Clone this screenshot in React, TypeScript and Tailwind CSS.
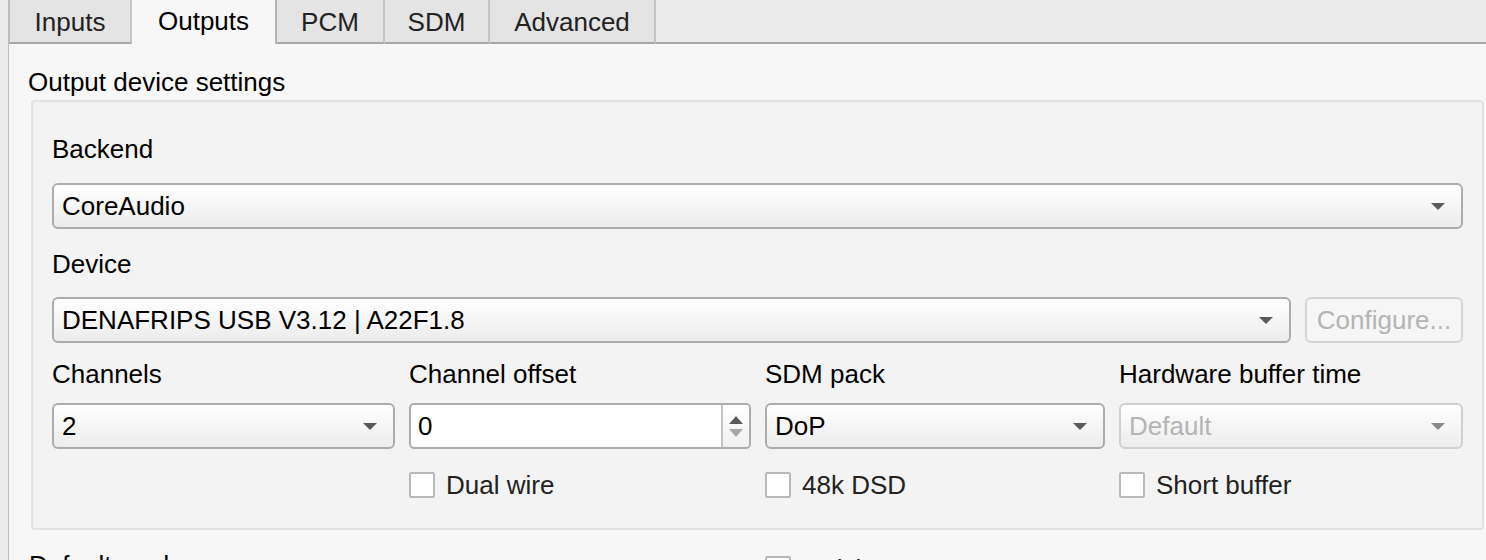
import React from 'react';

const font = { fontFamily: '"Liberation Sans", Arial, sans-serif' };

const Arrow: React.FC<{ light?: boolean }> = ({ light }) => (
  <svg width="16" height="9" viewBox="0 0 16 9" className="shrink-0">
    <path d="M1 1h14L8 8z" fill={light ? '#8a8a8a' : '#5a5a5a'} />
  </svg>
);

interface ComboProps {
  value: string;
  disabled?: boolean;
  className?: string;
}

const Combo: React.FC<ComboProps> = ({ value, disabled, className = '' }) => (
  <div
    className={`h-[46px] flex items-center justify-between pl-[8px] pr-[15px] rounded-[6px] border-2 ${
      disabled ? 'border-[#d0d0d0] text-[#b4b4b4]' : 'border-[#acacac] text-black'
    } bg-gradient-to-b from-white to-[#ececec] ${className}`}
  >
    <span className="leading-none">{value}</span>
    <Arrow light={disabled} />
  </div>
);

const Check: React.FC<{ label: string }> = ({ label }) => (
  <div className="flex items-center gap-[11px] h-[26px]">
    <div className="w-[26px] h-[26px] bg-white border-2 border-[#b9b9b9] rounded-[2px]" />
    <span className="text-[#222]">{label}</span>
  </div>
);

const Spin: React.FC<{ value: string }> = ({ value }) => (
  <div className="h-[46px] flex rounded-[5px] border-2 border-[#acacac] bg-white overflow-hidden">
    <div className="flex-1 flex items-center pl-[7px]">{value}</div>
    <div className="w-[28px] border-l-2 border-[#c4c4c4] flex flex-col items-center justify-center gap-[5px] bg-gradient-to-b from-white to-[#f0f0f0]">
      <svg width="14" height="8" viewBox="0 0 14 8">
        <path d="M7 0l7 8H0z" fill="#5a5a5a" />
      </svg>
      <svg width="14" height="8" viewBox="0 0 14 8">
        <path d="M0 0h14L7 8z" fill="#a8a8a8" />
      </svg>
    </div>
  </div>
);

const tabs = [
  { name: 'Inputs', w: 'w-[124px]' },
  { name: 'Outputs', w: 'w-[145px]', active: true },
  { name: 'PCM', w: 'w-[108px]' },
  { name: 'SDM', w: 'w-[105px]' },
  { name: 'Advanced', w: 'w-[166px]' },
];

export default function App() {
  return (
    <div style={font} className="w-[1486px] h-[560px] overflow-hidden bg-[#ececec] flex flex-col text-[26px] text-black">
      {/* tab bar */}
      <div className="h-[44px] flex shrink-0 pl-[8px]">
        {tabs.map((t, i) =>
          t.active ? (
            <div
              key={t.name}
              className={`${t.w} bg-[#f7f7f7] border-r-2 border-[#b4b4b4] flex items-start justify-center pt-[2px]`}
            >
              {t.name}
            </div>
          ) : (
            <div
              key={t.name}
              className={`${t.w} bg-[#e4e4e4] border-b-2 border-[#a8a8a8] ${i === 0 ? 'border-l-2' : ''} border-r-2 border-r-[#c4c4c4] border-l-[#bdbdbd] flex items-center justify-center pt-[2px] text-[#222]`}
            >
              {t.name}
            </div>
          )
        )}
        <div className="flex-1 border-b-2 border-[#a8a8a8]" />
      </div>

      {/* pane */}
      <div className="flex-1 ml-[8px] border-l border-[#bdbdbd] bg-[#f7f7f7] pl-[20px] pr-[2px] pt-[23px]">
        <div className="leading-[30px] h-[33px] -ml-[1px]">Output device settings</div>

        <div className="ml-[2px] rounded-[4px] border-2 border-[#e2e2e2] bg-[#f3f3f3] px-[19px] pt-[32px] pb-[30px]">
          <div className="leading-[30px]">Backend</div>
          <Combo value="CoreAudio" className="mt-[19px]" />

          <div className="leading-[30px] mt-[20px]">Device</div>
          <div className="flex gap-[14px] mt-[18px]">
            <Combo value="DENAFRIPS USB V3.12 | A22F1.8" className="flex-1" />
            <div className="w-[158px] h-[46px] rounded-[6px] border-2 border-[#d4d4d4] bg-[#f6f6f6] text-[#b4b4b4] flex items-center justify-center">
              Configure...
            </div>
          </div>

          <div className="grid grid-cols-[343px_342px_340px_1fr] gap-x-[14px] mt-[16px]">
            <div className="leading-[30px]">Channels</div>
            <div className="leading-[30px]">Channel offset</div>
            <div className="leading-[30px]">SDM pack</div>
            <div className="leading-[30px]">Hardware buffer time</div>

            <Combo value="2" className="mt-[14px]" />
            <div className="mt-[14px]">
              <Spin value="0" />
            </div>
            <Combo value="DoP" className="mt-[14px]" />
            <Combo value="Default" disabled className="mt-[14px]" />

            <div />
            <div className="mt-[23px]">
              <Check label="Dual wire" />
            </div>
            <div className="mt-[23px]">
              <Check label="48k DSD" />
            </div>
            <div className="mt-[23px]">
              <Check label="Short buffer" />
            </div>
          </div>
        </div>

        <div className="grid grid-cols-[736px_1fr] mt-[20px]">
          <div className="leading-[30px]">Default mode</div>
          <div className="pt-[6px]">
            <Check label="Quick start" />
          </div>
        </div>
      </div>
    </div>
  );
}
